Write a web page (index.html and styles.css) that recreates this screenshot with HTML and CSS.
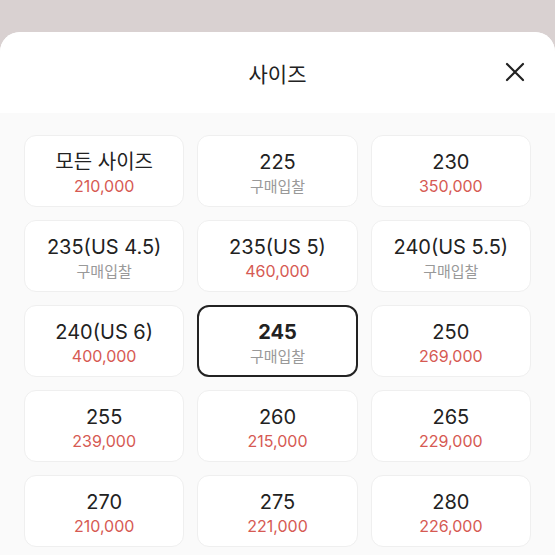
FILE: index.html
```html
<!DOCTYPE html>
<html lang="ko">
<head>
    <meta charset="UTF-8">
    <title>사이즈</title>
    <link rel="stylesheet" href="styles.css">
</head>
<body>
    <div class="sheet">
        <div class="sheet-header">
            <h1>사이즈</h1>
            <button class="close" aria-label="닫기">
                <svg width="20" height="20" viewBox="0 0 20 20">
                    <path d="M2 2 L18 18 M18 2 L2 18" stroke="#222" stroke-width="2.2" stroke-linecap="round" fill="none"/>
                </svg>
            </button>
        </div>

        <div class="size-grid">
            <div class="size-card">
                <div class="size">모든 사이즈</div>
                <div class="price">210,000</div>
            </div>
            <div class="size-card">
                <div class="size">225</div>
                <div class="price bid">구매입찰</div>
            </div>
            <div class="size-card">
                <div class="size">230</div>
                <div class="price">350,000</div>
            </div>
            <div class="size-card">
                <div class="size">235(US 4.5)</div>
                <div class="price bid">구매입찰</div>
            </div>
            <div class="size-card">
                <div class="size">235(US 5)</div>
                <div class="price">460,000</div>
            </div>
            <div class="size-card">
                <div class="size">240(US 5.5)</div>
                <div class="price bid">구매입찰</div>
            </div>
            <div class="size-card">
                <div class="size">240(US 6)</div>
                <div class="price">400,000</div>
            </div>
            <div class="size-card selected">
                <div class="size">245</div>
                <div class="price bid">구매입찰</div>
            </div>
            <div class="size-card">
                <div class="size">250</div>
                <div class="price">269,000</div>
            </div>
            <div class="size-card">
                <div class="size">255</div>
                <div class="price">239,000</div>
            </div>
            <div class="size-card">
                <div class="size">260</div>
                <div class="price">215,000</div>
            </div>
            <div class="size-card">
                <div class="size">265</div>
                <div class="price">229,000</div>
            </div>
            <div class="size-card">
                <div class="size">270</div>
                <div class="price">210,000</div>
            </div>
            <div class="size-card">
                <div class="size">275</div>
                <div class="price">221,000</div>
            </div>
            <div class="size-card">
                <div class="size">280</div>
                <div class="price">226,000</div>
            </div>
        </div>
    </div>
</body>
</html>
```

FILE: styles.css
```css
body {
    margin: 0;
    background-color: #d9d1d1;
    font-family: 'Inter', 'Noto Sans CJK KR', sans-serif;
    color: #222;
    overflow: hidden;
}

.sheet {
    margin-top: 32px;
    background-color: #fafafa;
    border-radius: 20px 20px 0 0;
    overflow: hidden;
    height: 540px;
}

.sheet-header {
    position: relative;
    height: 81px;
    background-color: white;
    display: flex;
    align-items: center;
    justify-content: center;
}

.sheet-header h1 {
    margin: 0;
    font-size: 21px;
    font-weight: 400;
    font-family: 'Noto Sans CJK KR', sans-serif;
}

.close {
    position: absolute;
    right: 30px;
    top: 30px;
    padding: 0;
    border: none;
    background: none;
    width: 20px;
    height: 20px;
}

.size-grid {
    display: grid;
    grid-template-columns: repeat(3, 1fr);
    gap: 13px;
    padding: 22px 24px 0 24px;
}

.size-card {
    box-sizing: border-box;
    height: 72px;
    padding-top: 4px;
    background-color: white;
    border: 1px solid #efefef;
    border-radius: 12px;
    display: flex;
    flex-direction: column;
    align-items: center;
    justify-content: center;
    gap: 1px;
}

.size-card.selected {
    border: 2px solid #222;
}

.size {
    font-size: 20px;
    line-height: 25px;
}

.selected .size {
    font-weight: 700;
}

.price {
    font-size: 16px;
    line-height: 20px;
    color: #d65a53;
}

.price.bid {
    color: #999;
    font-family: 'Noto Sans CJK KR', sans-serif;
    font-size: 15px;
}
```
